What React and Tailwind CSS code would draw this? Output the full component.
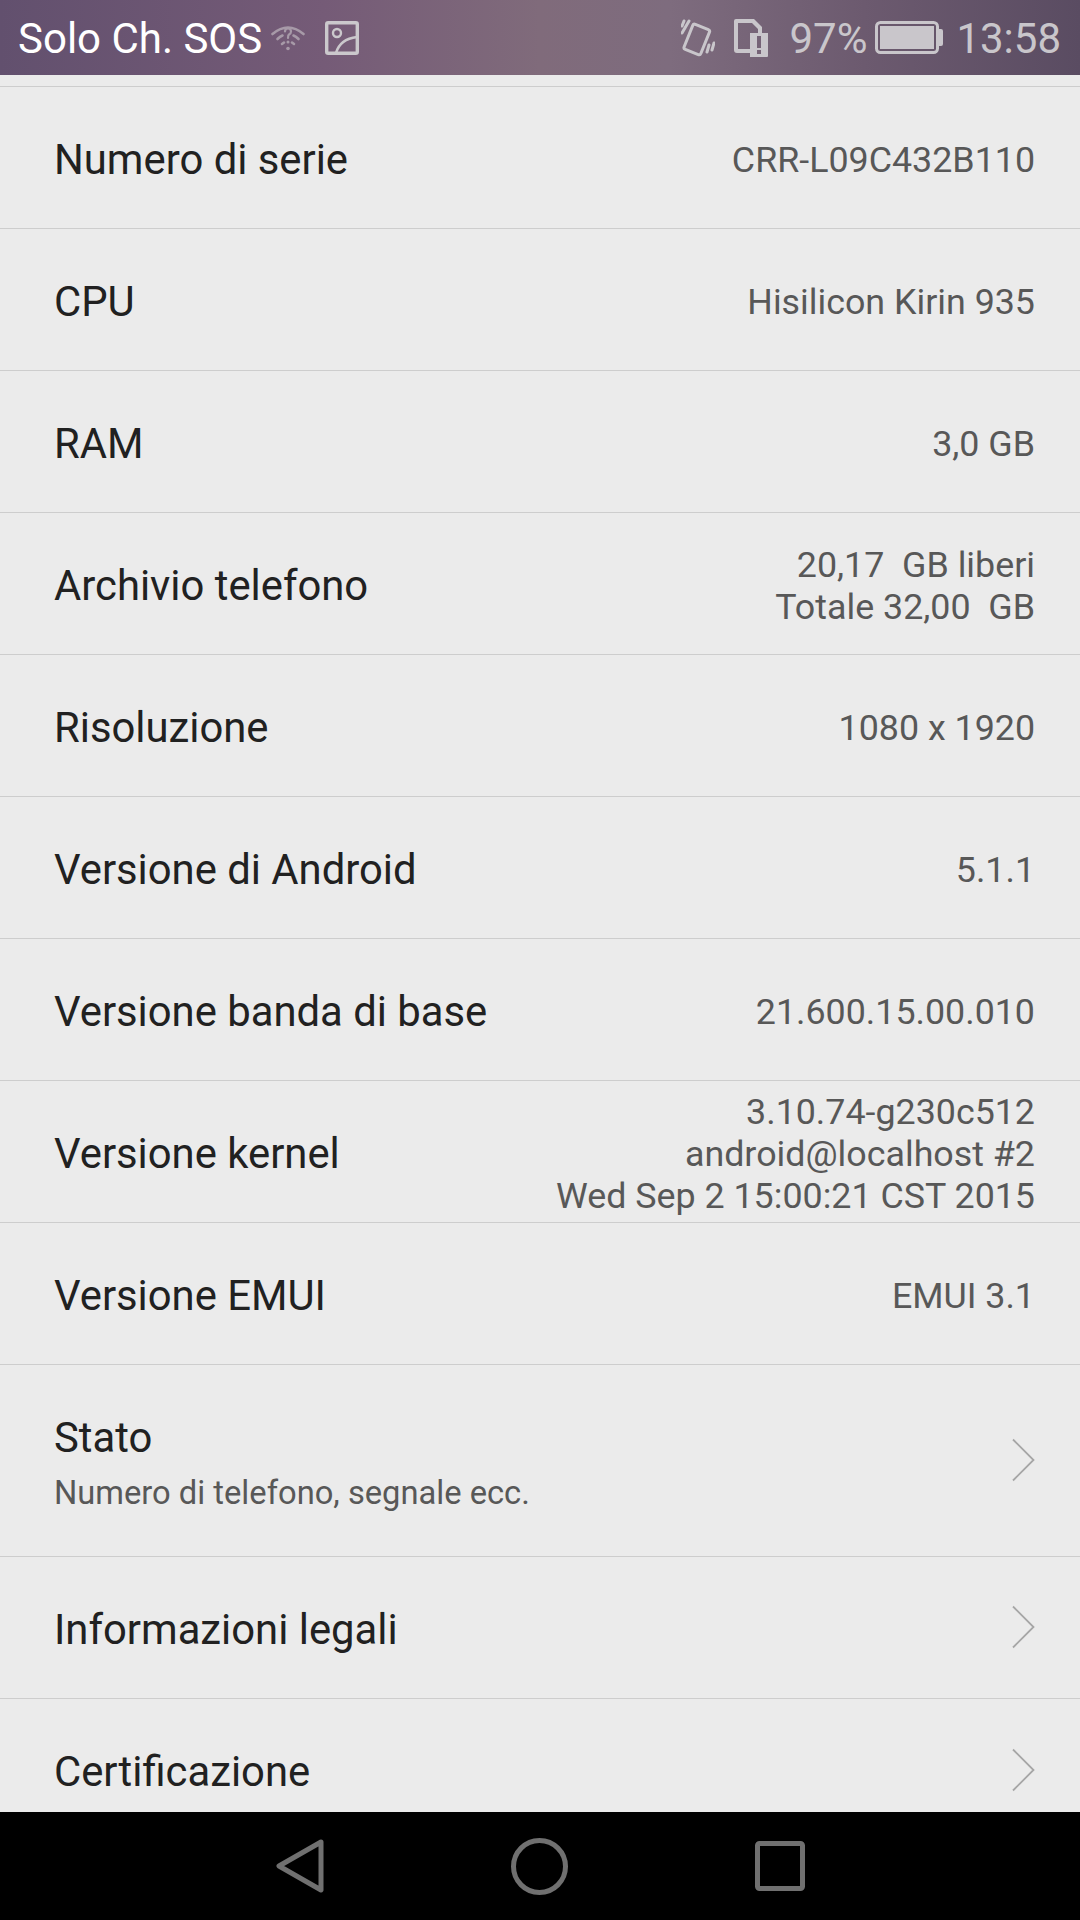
const rows = [
  { label: "Numero di serie", value: ["CRR-L09C432B110"] },
  { label: "CPU", value: ["Hisilicon Kirin 935"] },
  { label: "RAM", value: ["3,0 GB"] },
  { label: "Archivio telefono", value: ["20,17  GB liberi", "Totale 32,00  GB"] },
  { label: "Risoluzione", value: ["1080 x 1920"] },
  { label: "Versione di Android", value: ["5.1.1"] },
  { label: "Versione banda di base", value: ["21.600.15.00.010"] },
  { label: "Versione kernel", value: ["3.10.74-g230c512", "android@localhost #2", "Wed Sep 2 15:00:21 CST 2015"] },
  { label: "Versione EMUI", value: ["EMUI 3.1"] },
];

const Chevron = () => (
  <svg className="mr-[1px] mb-[1px]" width="23" height="44" viewBox="0 0 23 44" fill="none" stroke="#a6a6a6" strokeWidth="1.8">
    <path d="M1 1.5 L21.5 22 L1 42.5" />
  </svg>
);

const StatusBar = () => (
  <div className="h-[75px] flex items-center justify-between pl-[18px] pr-[19px] text-[42px] text-[#c9c6cb] bg-[linear-gradient(90deg,#62506e_0%,#755b77_30%,#806b7b_50%,#7e6c7e_62%,#6c5a6f_80%,#5a4c62_100%)] shrink-0">
    <div className="flex items-center">
      <span className="text-white pt-[2px]">Solo Ch. SOS</span>
      <svg className="ml-[9px]" width="34" height="28" viewBox="0 0 34 28" fill="none" stroke="#a79aa8" strokeWidth="2.6" strokeLinecap="round">
        <path d="M1.5 10 Q17 -3 32.5 10" />
        <path d="M6.5 15 Q9 12.5 11.5 11.5 M22.5 11.5 Q25 12.5 27.5 15" />
        <path d="M11 20 L13 18.5 M23 20 L21 18.5" />
        <path d="M14 7.5 Q14 4.5 17 4.5 Q20 4.5 20 7.5 Q20 9.5 18 10.5 Q17 11.2 17 14" strokeWidth="2.2" />
        <path d="M17 18 L17 18.1" strokeWidth="3" />
        <circle cx="17" cy="24.5" r="1.8" fill="#a79aa8" stroke="none" />
      </svg>
      <svg className="ml-[20px]" width="34" height="34" viewBox="0 0 34 34" fill="none" stroke="#cbc8cc" strokeWidth="3.4">
        <rect x="1.7" y="1.7" width="30.6" height="30.6" rx="1.5" />
        <circle cx="12" cy="12" r="4" strokeWidth="2.4" />
        <path d="M11 32 Q15 18 32 16" strokeWidth="2.6" />
      </svg>
    </div>
    <div className="flex items-center">
      <svg width="34" height="38" viewBox="0 0 34 38" fill="none" stroke="#c9c6cb" strokeWidth="3" strokeLinecap="round">
        <rect x="7" y="7" width="18" height="27" rx="2" transform="rotate(22 16 20)" />
        <path d="M8 2 L1 14 M3 2 L1 7 M28 26 L26 33 M33 24 L31 31" />
      </svg>
      <svg className="ml-[19px]" width="34" height="38" viewBox="0 0 34 38">
        <path fillRule="evenodd" fill="#c9c6cb" d="M2 0 H20 L28 8 V14 H34 V37 Q34 38 33 38 H16 V34 H3 Q0 34 0 31 V2 Q0 0 2 0 Z M4 4 V30 H16 V14 H24 V10 L18 4 Z M23 17 V29 H27 V17 Z M23 31 V35 H27 V31 Z" />
      </svg>
      <span className="ml-[21px] pt-[2px]">97%</span>
      <svg className="ml-[8px]" width="68" height="33" viewBox="0 0 68 33">
        <rect x="1.5" y="1.5" width="61" height="30" rx="4" fill="none" stroke="#c9c6cb" strokeWidth="3" />
        <rect x="5" y="5" width="54" height="23" fill="#c9c6cb" />
        <path d="M64 8 H66 Q68 8 68 10 V23 Q68 25 66 25 H64 Z" fill="#c9c6cb" />
      </svg>
      <span className="ml-[13px] pt-[2px]">13:58</span>
    </div>
  </div>
);

const App = () => (
  <div className="w-[1080px] h-[1920px] flex flex-col overflow-hidden bg-[#ebebeb] text-[#212121] font-['Roboto','Noto_Sans',sans-serif]">
    <StatusBar />
    <div className="flex-1 overflow-hidden flex flex-col pt-[11px]">
      <div className="border-t border-[#cdcdcd]" />
      {rows.map((r) => (
        <div key={r.label} className="h-[142px] shrink-0 flex items-center justify-between pl-[54px] pr-[45px] pt-[5px] border-b border-[#cdcdcd]">
          <span className="text-[41.8px]">{r.label}</span>
          <div className="text-right text-[35.8px] leading-[42px] text-[#585858] whitespace-pre">
            {r.value.map((v) => <div key={v}>{v}</div>)}
          </div>
        </div>
      ))}
      <div className="h-[192px] shrink-0 flex items-center justify-between pl-[54px] pr-[44px] border-b border-[#cdcdcd]">
        <div className="pt-[4px]">
          <div className="text-[41.8px] leading-[52px]">Stato</div>
          <div className="text-[32.7px] leading-[42px] mt-[8px] text-[#585858]">Numero di telefono, segnale ecc.</div>
        </div>
        <Chevron />
      </div>
      <div className="h-[142px] shrink-0 flex items-center justify-between pl-[54px] pr-[44px] border-b border-[#cdcdcd]">
        <span className="text-[41.8px] pt-[5px]">Informazioni legali</span>
        <Chevron />
      </div>
      <div className="h-[142px] shrink-0 flex items-center justify-between pl-[54px] pr-[44px]">
        <span className="text-[41.8px] pt-[5px]">Certificazione</span>
        <Chevron />
      </div>
    </div>
    <div className="h-[108px] shrink-0 bg-black flex items-center justify-center gap-[187px]">
      <svg width="48" height="54" viewBox="0 0 48 54" fill="none" stroke="#707070" strokeWidth="5" strokeLinejoin="round">
        <path d="M45 3 L3 27 L45 51 Z" />
      </svg>
      <svg width="57" height="57" viewBox="0 0 57 57" fill="none" stroke="#707070" strokeWidth="5">
        <circle cx="28.5" cy="28.5" r="26" />
      </svg>
      <svg width="50" height="50" viewBox="0 0 50 50" fill="none" stroke="#707070" strokeWidth="5">
        <rect x="2.5" y="2.5" width="45" height="45" rx="2" />
      </svg>
    </div>
  </div>
);

export default App;
